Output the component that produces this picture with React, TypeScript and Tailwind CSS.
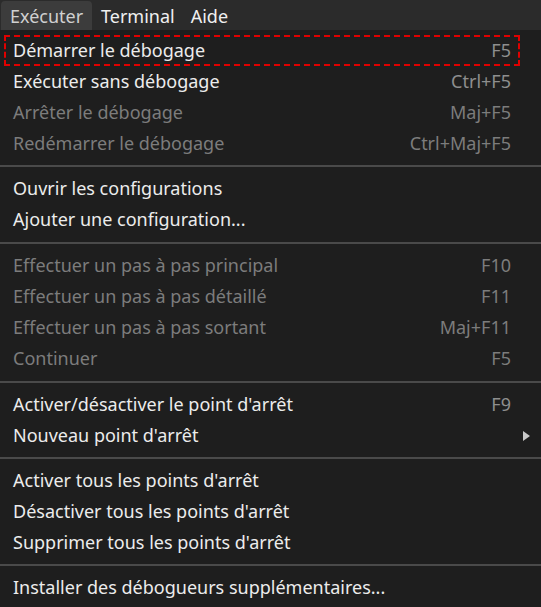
type Item = {
  label: string;
  shortcut?: string;
  disabled?: boolean;
  submenu?: boolean;
  focused?: boolean;
};

const groups: Item[][] = [
  [
    { label: "Démarrer le débogage", shortcut: "F5", focused: true },
    { label: "Exécuter sans débogage", shortcut: "Ctrl+F5" },
    { label: "Arrêter le débogage", shortcut: "Maj+F5", disabled: true },
    { label: "Redémarrer le débogage", shortcut: "Ctrl+Maj+F5", disabled: true },
  ],
  [
    { label: "Ouvrir les configurations" },
    { label: "Ajouter une configuration..." },
  ],
  [
    { label: "Effectuer un pas à pas principal", shortcut: "F10", disabled: true },
    { label: "Effectuer un pas à pas détaillé", shortcut: "F11", disabled: true },
    { label: "Effectuer un pas à pas sortant", shortcut: "Maj+F11", disabled: true },
    { label: "Continuer", shortcut: "F5", disabled: true },
  ],
  [
    { label: "Activer/désactiver le point d'arrêt", shortcut: "F9" },
    { label: "Nouveau point d'arrêt", submenu: true },
  ],
  [
    { label: "Activer tous les points d'arrêt" },
    { label: "Désactiver tous les points d'arrêt" },
    { label: "Supprimer tous les points d'arrêt" },
  ],
  [{ label: "Installer des débogueurs supplémentaires..." }],
];

function MenuRow({ item }: { item: Item }) {
  return (
    <div
      className={`ml-[4px] mr-[21px] flex h-[31px] items-center justify-between pl-[7px] pr-[7px] border-2 ${
        item.focused ? "border-dashed border-[#e00000]" : "border-transparent"
      }`}
    >
      <span className={item.disabled ? "text-[#7c7c7c]" : "text-[#ececec]"}>
        {item.label}
      </span>
      {item.shortcut && (
        <span className={item.disabled ? "text-[#7c7c7c]" : "text-[#8e8e8e]"}>
          {item.shortcut}
        </span>
      )}
      {item.submenu && (
        <svg width="7" height="10" viewBox="0 0 7 10" className="-mr-[19px]">
          <path d="M0 0 L7 5 L0 10 Z" fill="#c8c8c8" />
        </svg>
      )}
    </div>
  );
}

export default function App() {
  return (
    <div
      className="h-[607px] w-[541px] overflow-hidden bg-[#1e1e1e] text-[18px]"
      style={{ fontFamily: '"Noto Sans", "Open Sans", sans-serif' }}
    >
      <div className="flex h-[30px] items-end bg-[#2b2b2b] pl-[1px]">
        <div className="flex h-[29px] w-[91px] items-center rounded-t-[4px] bg-[#3c3c3c] pl-[9px] pt-[2px] text-[#d0d0d0]">
          Exécuter
        </div>
        <div className="flex h-[29px] items-center pl-[9px] pr-[16px] pt-[2px] text-[#f0f0f0]">Terminal</div>
        <div className="flex h-[29px] items-center pt-[2px] text-[#f0f0f0]">Aide</div>
      </div>
      <div className="pt-[5px]">
        {groups.map((g, gi) => (
          <div key={gi}>
            {gi > 0 && (
              <div
                className={`${
                  gi === 2 || gi === 3 ? "mt-[7px]" : "mt-[6px]"
                } mb-[6px] h-[2px] bg-[#4a4a4a]`}
              />
            )}
            {g.map((item) => (
              <MenuRow key={item.label} item={item} />
            ))}
          </div>
        ))}
      </div>
    </div>
  );
}
